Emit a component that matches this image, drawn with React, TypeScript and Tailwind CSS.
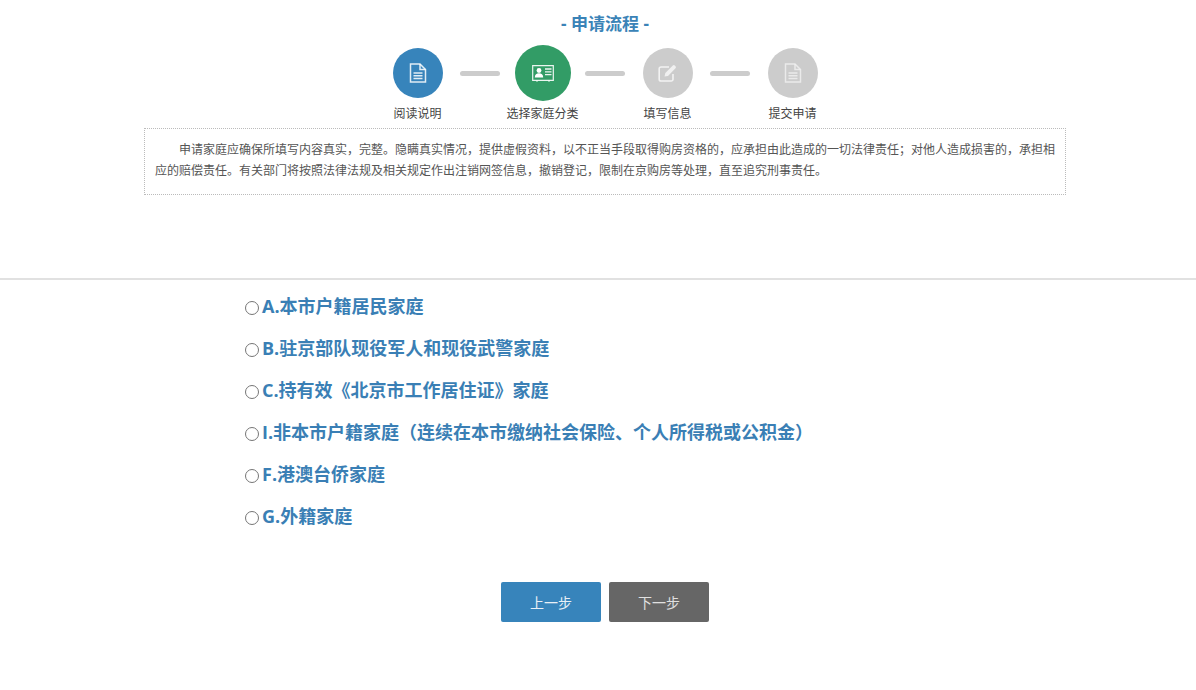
import React from "react";

const font = { fontFamily: '"Open Sans", "Noto Sans CJK SC", sans-serif' };

function DocIcon() {
  return (
    <svg width="18" height="20" viewBox="0 0 18 20" fill="none" stroke="#ffffff" strokeOpacity="0.85" strokeWidth="1.5">
      <path d="M1.5 1h9.500l5.500 5.500V19h-15z" />
      <path d="M11 1v5.500h5.500" />
      <path d="M4.500 10h9M4.500 12.800h9M4.500 15.600h9" />
    </svg>
  );
}

function CardIcon() {
  return (
    <svg width="22" height="17" viewBox="0 0 22 17" fill="none" stroke="#ffffff" strokeOpacity="0.9" strokeWidth="1.2">
      <path d="M0.7 0.7h20.600v14.600H0.7z" />
      <circle cx="7" cy="5.500" r="2.400" fill="#ffffff" stroke="none" />
      <path d="M2.800 12.500c0-3 1.800-4.200 4.200-4.200s4.200 1.200 4.200 4.200z" fill="#ffffff" stroke="none" />
      <path d="M13 4h6.500M13 6.800h6.500M13 9.600h6.500" strokeWidth="1.300" />
      <path d="M5 15.500v1.200M17 15.500v1.200" />
    </svg>
  );
}

function EditIcon() {
  return (
    <svg width="20" height="18" viewBox="0 0 20 18" fill="none" stroke="#ffffff" strokeOpacity="0.75" strokeWidth="1.6">
      <path d="M11 3H3a1.800 1.800 0 0 0-1.800 1.800v10.400A1.800 1.800 0 0 0 3 17h10.200a1.800 1.800 0 0 0 1.800-1.800V10" />
      <path d="M6.500 12.500l.8-3.500 7.500-7.500a1.400 1.400 0 0 1 2 0l.7.700a1.400 1.400 0 0 1 0 2L10 12z" fill="#ffffff" fillOpacity="0.7" stroke="none" />
    </svg>
  );
}

function Step({ label, bg, large, children }: { label: string; bg: string; large?: boolean; children: React.ReactNode }) {
  return (
    <div className="flex w-[125px] flex-col items-center">
      <div className="flex h-[62px] items-center justify-center">
        <div className={`flex items-center justify-center rounded-full ${bg} ${large ? "h-[56px] w-[56px]" : "h-[50px] w-[50px]"}`}>
          {children}
        </div>
      </div>
      <div className="text-[12px] leading-[20px] text-[#444]">{label}</div>
    </div>
  );
}

function Bar() {
  return <div className="absolute top-[29px] h-[5px] w-[40px] rounded-full bg-[#cccccc]" />;
}

const options = [
  "A.本市户籍居民家庭",
  "B.驻京部队现役军人和现役武警家庭",
  "C.持有效《北京市工作居住证》家庭",
  "I.非本市户籍家庭（连续在本市缴纳社会保险、个人所得税或公积金）",
  "F.港澳台侨家庭",
  "G.外籍家庭",
];

export default function App() {
  return (
    <div className="min-h-[690px] w-[1196px] bg-white" style={font}>
      <div className="ml-[144px] w-[922px]">
        <h2 className="pt-[11px] text-center text-[17px] font-bold leading-[26px] text-[#3a83b7]">- 申请流程 -</h2>
        <div className="relative mx-auto mt-[5px] flex w-[500px]">
          <Step label="阅读说明" bg="bg-[#3784bb]"><DocIcon /></Step>
          <Step label="选择家庭分类" bg="bg-[#329c66]" large><CardIcon /></Step>
          <Step label="填写信息" bg="bg-[#cccccc]"><EditIcon /></Step>
          <Step label="提交申请" bg="bg-[#cccccc]"><span className="opacity-70"><DocIcon /></span></Step>
          <div className="absolute left-[105px]"><Bar /></div>
          <div className="absolute left-[230px]"><Bar /></div>
          <div className="absolute left-[355px]"><Bar /></div>
        </div>
        <div className="mt-[4px] h-[67px] border border-dotted border-[#bbbbbb] px-[10px] py-[10px] text-justify text-[12px] leading-[21px] text-[#555] [text-indent:24px]">
          申请家庭应确保所填写内容真实，完整。隐瞒真实情况，提供虚假资料，以不正当手段取得购房资格的，应承担由此造成的一切法律责任；对他人造成损害的，承担相应的赔偿责任。有关部门将按照法律法规及相关规定作出注销网签信息，撤销登记，限制在京购房等处理，直至追究刑事责任。
        </div>
      </div>
      <div className="mt-[83px] h-[2px] bg-[#e1e1e1]" />
      <div className="ml-[245px] mt-[6px] flex flex-col">
        {options.map((o) => (
          <label key={o} className="flex h-[42px] items-center text-[18px] font-bold text-[#3a7fb5]">
            <input type="radio" name="family" className="mr-[3px] mt-[2px] h-[14px] w-[14px] appearance-none rounded-full border border-[#767676] bg-white" />
            <span className="mb-[2px]">{o}</span>
          </label>
        ))}
      </div>
      <div className="mt-[44px] ml-[501px] flex gap-[8px]">
        <button className="h-[40px] w-[100px] rounded-[2px] bg-[#3784bb] text-[14px] text-[#e8f0f6]">上一步</button>
        <button className="h-[40px] w-[100px] rounded-[2px] bg-[#666666] text-[14px] text-[#e0e0e0]">下一步</button>
      </div>
    </div>
  );
}
